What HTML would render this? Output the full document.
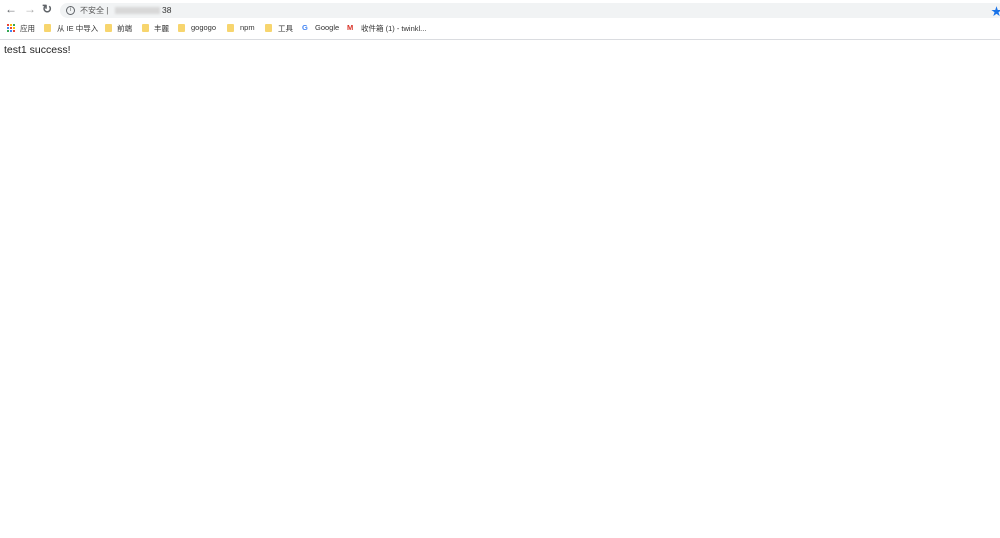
<!DOCTYPE html>
<html><head><meta charset="utf-8"><style>
body{margin:0;width:1000px;height:538px;background:#fff;font-family:"Liberation Sans","Noto Sans CJK SC",sans-serif;position:relative;overflow:hidden}
.tb{position:absolute;left:0;top:0;width:1000px;height:20px;background:#fff}
.omni{position:absolute;left:60px;top:3px;width:945px;height:15px;background:#f1f3f4;border-radius:8px}
.bm{position:absolute;top:20px;left:0;width:1000px;height:19px;border-bottom:1px solid #dadce0;font-size:7.5px;color:#333}
.bm span{position:absolute;top:3px;white-space:nowrap}
.f{position:absolute;top:4px;width:7px;height:8px;background:#f7d56e;border-radius:1px}
.ic{position:absolute;color:#5f6368;font-size:12px;font-weight:bold}
</style></head><body>
<div class="tb">
<span class="ic" style="left:5px;top:2px">&#8592;</span>
<span class="ic" style="left:24px;top:2px;color:#aaa">&#8594;</span>
<span class="ic" style="left:42px;top:2px">&#8635;</span>
<div class="omni">
<div style="position:absolute;left:6px;top:3px;width:7px;height:7px;border:1px solid #5f6368;border-radius:50%;font-size:6px;text-align:center;line-height:7px;color:#5f6368">i</div>
<span style="position:absolute;left:20px;top:2px;font-size:8px;color:#555">不安全 |</span>
<div style="position:absolute;left:55px;top:4px;width:45px;height:7px;background:#d8d8d8;filter:blur(1px)"></div>
<span style="position:absolute;left:102px;top:2px;font-size:8.5px;color:#333">38</span>
</div>
<span style="position:absolute;left:991px;top:3px;color:#1a73e8;font-size:11px">&#9733;</span>
</div>
<div class="bm">
<svg style="position:absolute;left:7px;top:4px" width="8" height="8"><g>
<rect x="0" y="0" width="2" height="2" fill="#ea4335"/><rect x="3" y="0" width="2" height="2" fill="#fbbc05"/><rect x="6" y="0" width="2" height="2" fill="#34a853"/>
<rect x="0" y="3" width="2" height="2" fill="#4285f4"/><rect x="3" y="3" width="2" height="2" fill="#ea4335"/><rect x="6" y="3" width="2" height="2" fill="#fbbc05"/>
<rect x="0" y="6" width="2" height="2" fill="#34a853"/><rect x="3" y="6" width="2" height="2" fill="#4285f4"/><rect x="6" y="6" width="2" height="2" fill="#ea4335"/></g></svg>
<span style="left:20px">应用</span>
<div class="f" style="left:44px"></div><span style="left:57px">从 IE 中导入</span>
<div class="f" style="left:105px"></div><span style="left:117px">前端</span>
<div class="f" style="left:142px"></div><span style="left:154px">丰麗</span>
<div class="f" style="left:178px"></div><span style="left:191px">gogogo</span>
<div class="f" style="left:227px"></div><span style="left:240px">npm</span>
<div class="f" style="left:265px"></div><span style="left:278px">工具</span>
<span style="left:302px;color:#4285f4;font-weight:bold">G</span><span style="left:315px">Google</span>
<span style="left:347px;color:#d93025;font-weight:bold">M</span><span style="left:361px">收件箱 (1) - twinkl...</span>
</div>
<div style="position:absolute;left:4px;top:44px;font-size:10.5px;color:#222">test1 success!</div>
</body></html>
